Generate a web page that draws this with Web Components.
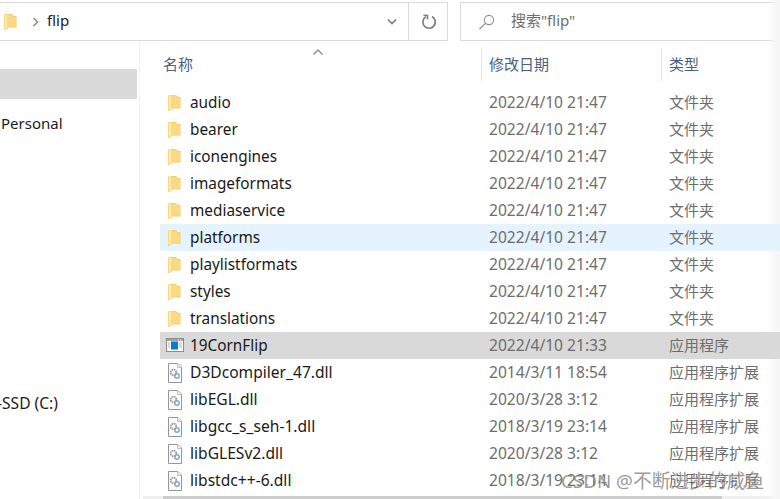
<!DOCTYPE html>
<html lang="zh"><head><meta charset="utf-8">
<style>
html,body{margin:0;height:100%;background:#fff;overflow:hidden}
body{font:15px "Noto Sans","Noto Sans CJK SC",sans-serif;color:#1a1a1a}
</style></head><body>
<template id="i-folder"><style>:host{display:block;width:14px;height:18px;margin-left:8px}svg{display:block}</style>
<svg width="14" height="18" viewBox="0 0 14 18"><path d="M3 1h5l1.500 2H12.500v11.500H3z" fill="#f0c860"/><path d="M4 1.800h3.800l1.500 2H12v10H4z" fill="#f9da82"/><path d="M0 1.600 4 .8V15.800L0 17.200z" fill="#f5d272"/><path d="M.7 2.100 3.400 1.500V15.200L.7 16.200z" fill="#fde8ad"/></svg></template>
<template id="i-exe"><style>:host{display:block;width:18px;height:14px;margin-left:6px;margin-bottom:1px}svg{display:block}</style>
<svg width="18" height="14" viewBox="0 0 18 14"><rect x=".5" y=".5" width="17" height="13" fill="#fbfbfb" stroke="#8c8c8c"/><rect x="1" y="1" width="16" height="2" fill="#a3a3a3"/><path d="M12 2h1M14 2h1" stroke="#fff"/><rect x="5" y="3.500" width="7" height="8" fill="#0a78d7"/><path d="M2 5h2M2 7h2M2 9h2M13 5h3M13 7h3M13 9h3" stroke="#b5b5b5"/></svg></template>
<template id="i-dll"><style>:host{display:block;width:14px;height:20px;margin-left:8px}svg{display:block}</style>
<svg width="14" height="20" viewBox="0 0 14 20"><path d="M.5.5H10L13.500 4V19.500H.5z" fill="#fdfdfd" stroke="#969696"/><path d="M9.500.5V4.500H13.500" fill="#eee" stroke="#bdbdbd"/><circle cx="5.500" cy="9.500" r="2.800" fill="none" stroke="#9c9c9c" stroke-width="1.800" stroke-dasharray="1.600 .6"/><circle cx="9" cy="13" r="2.200" fill="none" stroke="#7fabd6" stroke-width="1.500"/></svg></template>

<template id="t-row"><style>
:host{display:grid;grid-template-columns:30px 299px 180px 1fr;height:27px;align-items:center;white-space:nowrap;line-height:27px;margin-left:20px;position:relative;z-index:1}
:host([hl]){background:#e5f3ff}:host([sel]){background:#d9d9d9}
.ic{display:flex;justify-content:flex-start}
.n{font-size:15.35px;line-height:26px;align-self:start}
:host([dll]) .n{font-size:15.6px}
.d{color:#6d6d6d}
.dt{font-size:15.6px;line-height:26px;align-self:start}
</style><div class="ic"><slot name="icon"></slot></div><div class="n"><slot></slot></div><div class="d dt"><slot name="date"></slot></div><div class="d"><slot name="type"></slot></div></template>

<template id="t-head"><style>
:host{display:grid;grid-template-columns:322px 180px 1fr;height:33px;margin:7px 0 8px 19px;color:#4c607a;position:relative}
div{padding-left:7px;line-height:33px}
div+div{border-left:1px solid #e5e5e5}
.n{padding-left:4px}
svg{position:absolute;left:153px;top:0}
</style><div class="n"><slot></slot></div><div><slot name="date"></slot></div><div><slot name="type"></slot></div>
<svg width="12" height="8" viewBox="0 0 12 8"><path d="M1.500 6.500 6 2l4.500 4.500" fill="none" stroke="#8a8a8a" stroke-width="1.300"/></svg></template>

<template id="t-addr"><style>
:host{display:flex;height:39px;margin-top:2px;flex:none;box-sizing:border-box}
.box{display:flex;align-items:center;border:solid #d9d9d9;border-width:1px 0;box-sizing:border-box}
.path{width:408px}
.fo{margin-left:-4px}
.ch{margin:0 8px 0 14px}
.fl{color:#1a1a1a;line-height:25px;padding-bottom:2px}
.tools{width:40px;justify-content:center;border-left:1px solid #d9d9d9;border-right:1px solid #d9d9d9;padding-left:1px}
.gap{width:12px}
.search{flex:1;border-left:1px solid #d9d9d9;padding-left:17px;color:#6d6d6d}
.search svg{margin-right:15px}
.search span{line-height:25px;padding-bottom:2px}
svg{display:block}
</style>
<div class="box path"><div class="fo"><w-folder></w-folder></div>
<svg class="ch" width="7" height="10" viewBox="0 0 7 10"><path d="M1.500 1 5.500 5l-4 4" fill="none" stroke="#8a8a8a" stroke-width="1.500"/></svg>
<span class="fl">flip</span>
<svg style="margin-left:auto;margin-right:11px" width="10" height="7" viewBox="0 0 10 7"><path d="M1 1.500 5 5.500l4-4" fill="none" stroke="#7a7a7a" stroke-width="1.600"/></svg></div>
<div class="box tools"><svg width="16" height="16" viewBox="0 0 16 16"><path d="M4.800 2.800A6.200 6.200 0 1 0 11 2.600" fill="none" stroke="#7d7d7d" stroke-width="1.700"/><path d="M3.500 .8 7.500 1v4" fill="none" stroke="#7d7d7d" stroke-width="1.500" transform="translate(-1 .5)"/></svg></div>
<div class="gap"></div>
<div class="box search"><svg width="18" height="16" viewBox="0 0 18 16"><circle cx="11" cy="6" r="4.600" fill="none" stroke="#8f8f8f" stroke-width="1.100"/><path d="M7.600 9.300 1.500 15" fill="none" stroke="#b08a68" stroke-width="1.200"/></svg><span>搜索"flip"</span></div>
</template>

<template id="t-side"><style>
:host{display:block;width:139px;flex:none;border-right:1px solid #f0f0f0;padding-top:28px;overflow:hidden;white-space:nowrap;box-sizing:content-box}
.s{height:30px;width:137px;background:#d9d9d9;margin-bottom:11px}
.r{height:30px;line-height:26px;padding-left:1px}
.c{margin-top:250px;margin-left:-3px;padding-left:0;font-size:15.6px}
</style><div class="s"></div><div class="r">Personal</div><div class="r c">-SSD (C:)</div></template>

<template id="t-list"><style>
:host{display:flex;flex-direction:column;flex:1;min-width:0;overflow:hidden}
.rows{flex:1;min-height:0}
.hs{flex:none;height:3px;background:#f0f0f0;display:flex;margin-left:3px}
.hs i{display:block;height:3px;width:559px;margin-left:20px;background:#cdcdcd}
</style><div class="rows"><slot></slot></div><div class="hs"><i></i></div></template>

<template id="t-win"><style>
:host{display:flex;flex-direction:column;height:499px;width:780px;overflow:hidden;position:relative}
.body{display:flex;flex:1;min-height:0}
.wm{position:absolute;left:561px;top:468px;font-size:18.8px;line-height:26px;color:rgba(105,105,105,.68);text-shadow:1px 1px 1px rgba(255,255,255,.8);white-space:nowrap;pointer-events:none;z-index:2}
.fade{position:absolute;right:0;top:0;bottom:0;width:14px;background:linear-gradient(90deg,rgba(247,247,247,0),#f7f7f7 70%)}
</style><slot name="addr"></slot><div class="body"><slot name="side"></slot><slot></slot></div><div class="fade"></div><div class="wm">CSDN @不断进步的咸鱼</div></template>

<x-win>
  <x-addr slot="addr"></x-addr>
  <x-side slot="side"></x-side>
  <x-list id="list"></x-list>
</x-win>
<script>
function shadow(el,id){const s=el.attachShadow({mode:'open'});s.appendChild(document.getElementById(id).content.cloneNode(true));return s}
for(const [n,id] of [['w-folder','i-folder'],['w-exe','i-exe'],['w-dll','i-dll'],['x-row','t-row'],['x-head','t-head'],['x-addr','t-addr'],['x-side','t-side'],['x-list','t-list'],['x-win','t-win']]){
  customElements.define(n,class extends HTMLElement{constructor(){super();shadow(this,id)}});
}
const F='文件夹',E='应用程序扩展',D='2022/4/10 21:47';
const rows=[['audio','w-folder',D,F],['bearer','w-folder',D,F],['iconengines','w-folder',D,F],['imageformats','w-folder',D,F],['mediaservice','w-folder',D,F],['platforms','w-folder',D,F,'hl'],['playlistformats','w-folder',D,F],['styles','w-folder',D,F],['translations','w-folder',D,F],['19CornFlip','w-exe','2022/4/10 21:33','应用程序','sel'],['D3Dcompiler_47.dll','w-dll','2014/3/11 18:54',E,'dll'],['libEGL.dll','w-dll','2020/3/28 3:12',E,'dll'],['libgcc_s_seh-1.dll','w-dll','2018/3/19 23:14',E,'dll'],['libGLESv2.dll','w-dll','2020/3/28 3:12',E,'dll'],['libstdc++-6.dll','w-dll','2018/3/19 23:14',E,'dll']];
const list=document.getElementById('list');
const h=document.createElement('x-head');h.innerHTML='名称<span slot="date">修改日期</span><span slot="type">类型</span>';
list.appendChild(h);
for(const [n,ic,d,t,fl] of rows){const r=document.createElement('x-row');if(fl)r.setAttribute(fl,'');
 const i=document.createElement(ic);i.slot='icon';r.appendChild(i);r.appendChild(document.createTextNode(n));
 const a=document.createElement('span');a.slot='date';a.textContent=d;r.appendChild(a);
 const b=document.createElement('span');b.slot='type';b.textContent=t;r.appendChild(b);list.appendChild(r)}
</script>
</body></html>
